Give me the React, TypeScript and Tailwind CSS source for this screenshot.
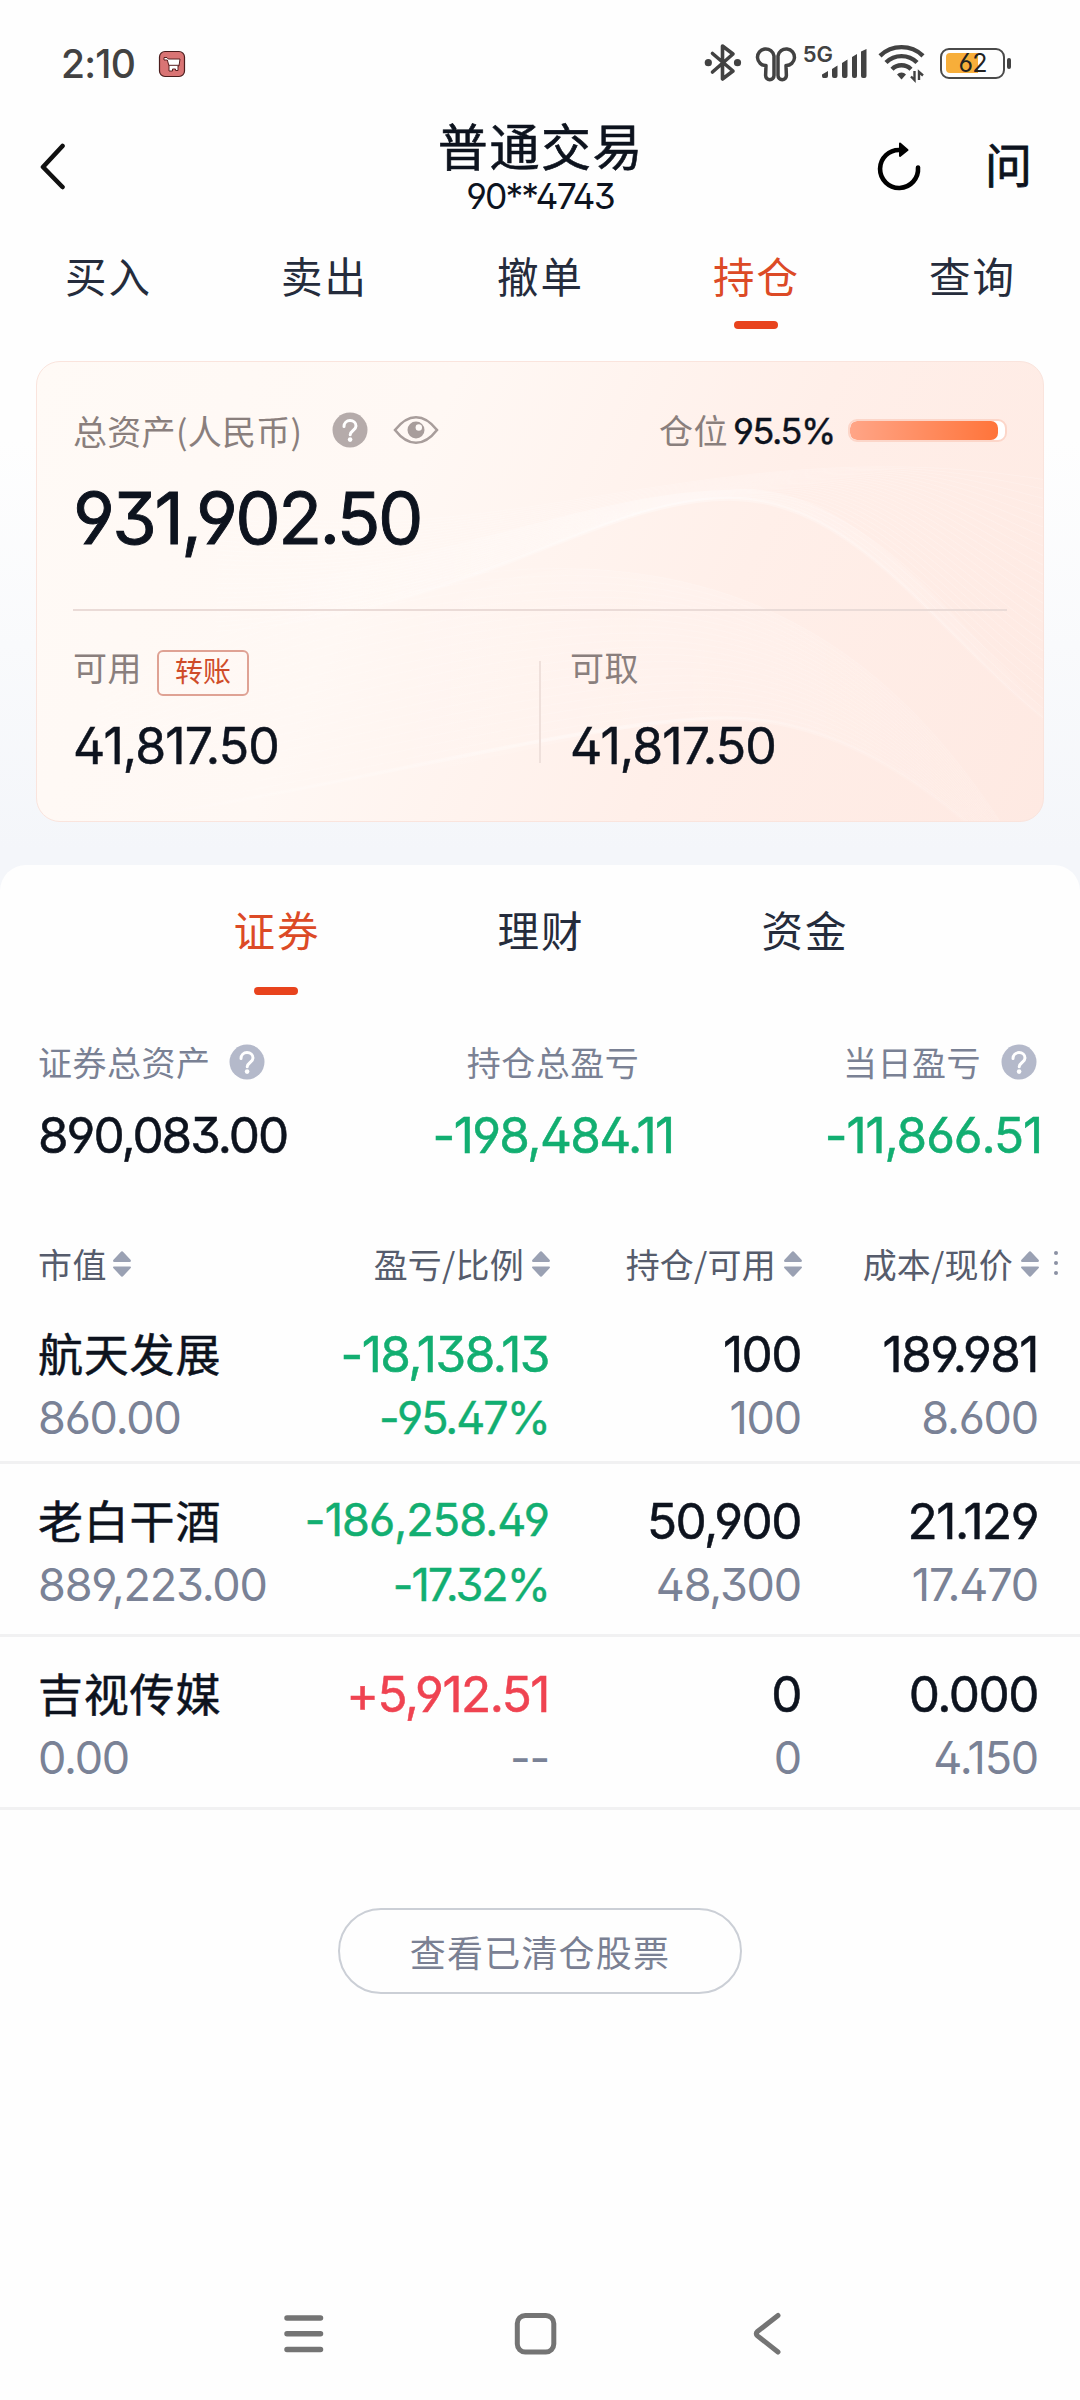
import type { ReactNode } from "react";
import clsx from "clsx";

type Tone = "up" | "down" | "flat";

type Holding = {
  name: string;
  marketValue: string;
  profit: string;
  ratio: string;
  tone: Tone;
  shares: string;
  available: string;
  cost: string;
  price: string;
  compact?: boolean;
};

const NAV_TABS = ["买入", "卖出", "撤单", "持仓", "查询"];
const ASSET_TABS = ["证券", "理财", "资金"];

const HOLDINGS: Holding[] = [
  {
    name: "航天发展",
    marketValue: "860.00",
    profit: "-18,138.13",
    ratio: "-95.47%",
    tone: "down",
    shares: "100",
    available: "100",
    cost: "189.981",
    price: "8.600",
  },
  {
    name: "老白干酒",
    marketValue: "889,223.00",
    profit: "-186,258.49",
    ratio: "-17.32%",
    tone: "down",
    shares: "50,900",
    available: "48,300",
    cost: "21.129",
    price: "17.470",
    compact: true,
  },
  {
    name: "吉视传媒",
    marketValue: "0.00",
    profit: "+5,912.51",
    ratio: "--",
    tone: "up",
    shares: "0",
    available: "0",
    cost: "0.000",
    price: "4.150",
  },
];

/** Digits with open 6/9 and a flat-top 3 where the font has them. */
function Num({ className, children }: { className?: string; children: ReactNode }) {
  return (
    <span
      className={clsx(
        "block whitespace-nowrap font-['Inter','Noto_Sans_CJK_SC',sans-serif] leading-none [font-feature-settings:'ss01','cv03','cv04','cv09']",
        className,
      )}
    >
      {children}
    </span>
  );
}

function HelpIcon({ className }: { className?: string }) {
  return (
    <svg viewBox="0 0 36 36" className={clsx("size-9 shrink-0", className)}>
      <circle cx="18" cy="18" r="17.5" fill="currentColor" />
      <path
        d="M12 14.6c0-3.6 2.6-6 6-6s6 2.3 6 5.4c0 4.4-5.8 4.6-5.8 8.8"
        fill="none"
        stroke="#fff"
        strokeWidth="3"
        strokeLinecap="round"
      />
      <circle cx="18.1" cy="27.6" r="2.3" fill="#fff" />
    </svg>
  );
}

function SortIcon() {
  return (
    <svg viewBox="0 0 20 28" className="h-7 w-5 shrink-0" fill="#9aa1b3">
      <path d="M8.5 2.2a2 2 0 0 1 3 0l7 7.6c.9 1 .5 2.2-.8 2.2H2.3c-1.3 0-1.7-1.2-.8-2.2z" />
      <path d="M8.5 25.8a2 2 0 0 0 3 0l7-7.6c.9-1 .5-1.7-.8-1.7H2.3c-1.3 0-1.7.7-.8 1.7z" />
    </svg>
  );
}

function StatusBar() {
  return (
    <div className="flex h-[104px] items-start justify-between pl-[61px] pr-[69px] pt-[43px] text-[#424242]">
      <div className="flex h-10 items-center">
        <Num className="w-[74px] text-[39px] font-medium tracking-[-0.8px]">2:10</Num>
        <svg viewBox="0 0 28 28" className="ml-[23px] mt-[2px] size-7">
          <rect x="1.5" y="1.5" width="25" height="25" rx="5.5" fill="#d97474" stroke="#4a1d1d" strokeWidth="1.2" />
          <path
            d="M6 7.5h3l1.200 1.500H22l-1 7h-1v4.500h-2.500V19h-3v2H11v-5l-1.700-6H6z"
            fill="#fff"
            stroke="#5a2020"
            strokeWidth="1"
            strokeLinejoin="round"
          />
          <path d="M11 15.3h10" stroke="#5a2020" strokeWidth="1" />
        </svg>
      </div>
      <div className="flex h-10 items-center">
        {/* bluetooth */}
        <svg viewBox="0 0 38 40" className="h-10 w-[38px]" fill="none" stroke="currentColor" strokeWidth="3.6" strokeLinejoin="round" strokeLinecap="round">
          <path d="M8.500 10.500 29 28 18.500 36V3L29 11 8.500 29" />
          <circle cx="4.3" cy="19.7" r="3.6" fill="currentColor" stroke="none" />
          <circle cx="33.5" cy="19.7" r="3.6" fill="currentColor" stroke="none" />
        </svg>
        {/* earbuds */}
        <svg viewBox="0 0 44 40" className="ml-[12px] h-10 w-11" fill="none" stroke="currentColor" strokeWidth="3.5" strokeLinejoin="round">
          <path d="M12 22.500a8.300 8.300 0 1 1 8-9.500v19.500a4.200 4.200 0 0 1-8.400 0z" />
          <path d="M32 22.500a8.300 8.300 0 1 0-8-9.500v19.500a4.200 4.200 0 0 0 8.400 0z" />
        </svg>
        <Num className="ml-[5px] -mt-[18px] text-[22px] font-semibold">5G</Num>
        <svg viewBox="0 0 46 40" className="-ml-3 h-10 w-[46px]" fill="currentColor">
          <path d="M1 31.500l6-3.500v5q0 2-2 2H2.500Q1 35 1 33zM11 26l5.500-3.500V33q0 2-2 2H13q-2 0-2-2zM21 20l5.500-3.500V33q0 2-2 2H23q-2 0-2-2zM31 14l5-3v22q0 2-2 2h-1q-2 0-2-2zM40 8.500l5.500-2.500V33q0 2-2 2H42q-2 0-2-2z" />
        </svg>
        <svg viewBox="0 0 48 40" className="ml-[11px] h-10 w-12" fill="none" stroke="currentColor" strokeWidth="4.4">
          <path d="M2 12.800a31 31 0 0 1 43 0M8 19.500a22 22 0 0 1 31 0M14 26.200a13.500 13.500 0 0 1 19 0" />
          <path d="M23.500 36.500l-4.500-5a6 6 0 0 1 9 0z" fill="currentColor" stroke="none" />
          <path d="M36.500 28v9l-3.500-3.500M41 37v-8l4 3.500" strokeWidth="2.4" />
        </svg>
        <div className="ml-[14px] flex items-center">
          <div className="relative flex h-[31px] w-[65px] items-center justify-center rounded-[9px] border-[2.500px] border-[#4a4a4a]">
            <div className="absolute left-1 top-[3px] h-5 w-[32px] rounded-l-[4px] bg-[#f7ae3a]" />
            <Num className="relative text-[25px] tracking-[-1px] text-[#222]">62</Num>
          </div>
          <div className="ml-[2px] h-[11px] w-[4px] rounded-full bg-[#424242]" />
        </div>
      </div>
    </div>
  );
}

function Header() {
  return (
    <header className="grid h-[124px] grid-cols-[300px_1fr_300px] text-[#0d131e]">
      <svg viewBox="0 0 30 48" className="ml-[38px] mt-[38px] h-12 w-[30px]" fill="none" stroke="#111" strokeWidth="4.6" strokeLinecap="round" strokeLinejoin="round">
        <path d="M24.500 4 5 25l19.500 20" />
      </svg>
      <div className="flex flex-col items-center pt-[15px]">
        <h1 className="pl-[2px] text-[50px] leading-[50px] tracking-[1.600px] [-webkit-text-stroke:0.6px]">普通交易</h1>
        <Num className="mt-[10px] text-[35.5px] leading-[36px] tracking-[-1.9px]">90**4743</Num>
      </div>
      <div className="flex items-start pl-[96px] pt-[36px]">
        <svg viewBox="0 0 48 52" className="h-[52px] w-12" fill="none" stroke="#000" strokeWidth="4.6" strokeLinecap="round">
          <path d="M42 27.500A19 19 0 1 1 24 10" />
          <path d="M24 3.500l7.500 6.500-7.500 6z" fill="#000" strokeWidth="2" strokeLinejoin="round" />
        </svg>
        <span className="-mt-px ml-[61px] text-[47px] leading-[48px] [-webkit-text-stroke:0.8px]">问</span>
      </div>
    </header>
  );
}

function NavTabs() {
  return (
    <nav className="grid h-[112px] grid-cols-5 pt-[24px]">
      {NAV_TABS.map((tab) => (
        <div
          key={tab}
          className={clsx("flex flex-col items-center", tab === "持仓" ? "text-[#dc4a26]" : "text-[#252c3c]")}
        >
          <span className="pl-px text-[41.5px] leading-[46px] tracking-[1.9px]">{tab}</span>
          {tab === "持仓" && <span className="mt-[23px] h-2 w-11 rounded-full bg-[#e8431d]" />}
        </div>
      ))}
    </nav>
  );
}

// Blend two sets of cubic control points into n curves.
function blend(a: number[], b: number[], n: number) {
  return Array.from({ length: n }, (_, i) => {
    const t = i / (n - 1);
    const p = a.map((v, k) => (v + (b[k] - v) * t).toFixed(1));
    return `M${p[0]} ${p[1]}C${p[2]} ${p[3]} ${p[4]} ${p[5]} ${p[6]} ${p[7]}C${p[8]} ${p[9]} ${p[10]} ${p[11]} ${p[12]} ${p[13]}`;
  });
}

function CardWaves() {
  const upper = blend(
    [180, 150, 420, 190, 600, 105, 850, 105, 910, 105, 960, 110, 1010, 118],
    [180, 270, 440, 250, 560, 137, 694, 137, 820, 137, 900, 270, 1010, 358],
    26,
  );
  const lower = blend(
    [60, 330, 240, 240, 420, 200, 560, 208, 760, 220, 880, 330, 966, 462],
    [60, 460, 260, 440, 540, 358, 690, 357, 780, 357, 860, 400, 932, 462],
    22,
  );
  return (
    <svg viewBox="0 0 1008 460" className="absolute inset-0 size-full" fill="none">
      <defs>
        <linearGradient id="glow" x1="0" y1="0" x2="1" y2="0">
          <stop offset="0" stopColor="#fff" stopOpacity="0" />
          <stop offset="0.55" stopColor="#fff" stopOpacity="0.32" />
          <stop offset="1" stopColor="#fff" stopOpacity="0.05" />
        </linearGradient>
      </defs>
      <path
        d="M180 270C440 250 560 137 694 137C820 137 900 270 1010 358V350C900 235 810 118 694 128C560 131 440 190 180 235z"
        fill="url(#glow)"
      />
      <path
        d="M300 430C500 390 600 357 690 357C780 357 860 400 932 462H966C880 330 760 220 560 208C420 200 300 300 300 430z"
        fill="url(#glow)"
        opacity="0.5"
      />
      {upper.map((d) => (
        <path key={d} d={d} stroke="#fff" strokeOpacity="0.2" />
      ))}
      {lower.map((d) => (
        <path key={d} d={d} stroke="#fff" strokeOpacity="0.14" />
      ))}
      <path d={upper[upper.length - 1]} stroke="url(#glow)" strokeWidth="4" />
      <path d={lower[lower.length - 1]} stroke="url(#glow)" strokeWidth="4" />
    </svg>
  );
}

function AssetCard() {
  return (
    <section className="relative mx-9 mt-[21px] h-[461px] overflow-hidden rounded-[24px] border-[1.500px] border-[#fae4dd] bg-[linear-gradient(115deg,#fffaf6_0%,#fff8f4_35%,#ffefe9_66%,#fee9e2_100%)]">
      <CardWaves />
      <div className="relative px-9 text-[#8a7f7d]">
        <div className="mt-[50px] flex h-[36px] items-center">
          <span className="mt-px text-[34px] leading-[36px] tracking-[0.300px]">总资产(人民币)</span>
          <HelpIcon className="ml-[30px] text-[#b5abaa]" />
          <svg viewBox="0 0 46 32" className="ml-[25px] h-8 w-[46px]" fill="none" stroke="#a89d9b" strokeWidth="2.6">
            <path d="M2 16C9 7 16 3.200 23 3.200S37 7 44 16C37 25 30 28.800 23 28.800S9 25 2 16z" />
            <circle cx="23" cy="16" r="8.5" fill="#a89d9b" stroke="none" />
            <circle cx="25.8" cy="13.5" r="3.2" fill="#fffaf7" stroke="none" />
          </svg>
          <span className="ml-auto text-[34px] leading-[36px] tracking-[0.500px]">仓位</span>
          <Num className="ml-[5px] mt-px w-[104px] text-[36px] tracking-[-1.400px] text-[#0d131e] [-webkit-text-stroke:0.4px]">95.5%</Num>
          <div className="ml-[11px] h-[23px] w-[159px] overflow-hidden rounded-[9px] border-2 border-[#fcd6c9] bg-white">
            <div className="h-full rounded-[7px] bg-[linear-gradient(90deg,#ffa587,#ff743a)]" style={{ width: "95.5%" }} />
          </div>
        </div>
        <Num className="mt-[34px] text-[72px] leading-[72px] tracking-[-2.500px] text-[#0d131e] [-webkit-text-stroke:0.9px]">931,902.50</Num>
        <div className="mt-[55px] h-[2px] bg-[#eadbd7]" />
        <div className="grid grid-cols-[466px_1fr]">
          <div>
            <div className="mt-[38px] flex h-[48px] items-start">
              <span className="text-[34px] leading-[36px] tracking-[0.500px]">可用</span>
              <span className="ml-[15px] mt-px flex h-[46px] w-[92px] items-center justify-center rounded-[6px] border-2 border-[#dfa294] pb-[6px] text-[28px] leading-none text-[#cf4c29]">
                转账
              </span>
            </div>
            <Num className="mt-[24px] text-[50px] tracking-[-0.900px] text-[#0d131e] [-webkit-text-stroke:0.5px]">41,817.50</Num>
          </div>
          <div className="relative pl-[31px]">
            <div className="absolute left-0 top-[50px] h-[102px] w-[2px] bg-[#efe0db]" />
            <div className="mt-[38px] flex h-[48px] items-start">
              <span className="text-[34px] leading-[36px] tracking-[0.500px]">可取</span>
            </div>
            <Num className="mt-[24px] text-[50px] tracking-[-0.900px] text-[#0d131e] [-webkit-text-stroke:0.5px]">41,817.50</Num>
          </div>
        </div>
      </div>
    </section>
  );
}

function AssetTabs() {
  return (
    <div className="mx-auto grid h-[130px] w-[792px] grid-cols-3 pt-[41px]">
      {ASSET_TABS.map((tab, i) => (
        <div key={tab} className={clsx("flex flex-col items-center", i === 0 ? "text-[#dc4a26]" : "text-[#252c3c]")}>
          <span className="pl-[2px] text-[41.5px] leading-[46px] tracking-[1.9px]">{tab}</span>
          {i === 0 && <span className="mt-[35px] h-2 w-11 rounded-full bg-[#e8431d]" />}
        </div>
      ))}
    </div>
  );
}

function Summary() {
  const value = "mt-[31px] text-[49.5px] [-webkit-text-stroke:0.5px]";
  return (
    <div className="grid grid-cols-[330px_370px_1fr] pl-[38px] pr-[38px] pt-[49px] text-[34px] leading-[36px] tracking-[0.500px] text-[#7a8194]">
      <div>
        <div className="flex items-center">
          证券总资产
          <HelpIcon className="ml-[18px] text-[#b4b9ca]" />
        </div>
        <Num className={clsx(value, "tracking-[-2px] text-[#0d131e]")}>890,083.00</Num>
      </div>
      <div className="flex flex-col items-center">
        <div>持仓总盈亏</div>
        <Num className={clsx(value, "tracking-[-1.6px] text-[#12ae71]")}>-198,484.11</Num>
      </div>
      <div className="flex flex-col items-end">
        <div className="flex items-center pr-[5px]">
          当日盈亏
          <HelpIcon className="ml-[20px] text-[#b4b9ca]" />
        </div>
        <Num className={clsx(value, "tracking-[-1.1px] text-[#12ae71]")}>-11,866.51</Num>
      </div>
    </div>
  );
}

const GRID = "grid grid-cols-[266px_245px_252px_237px] pl-[38px]";

function TableHeader() {
  return (
    <div className={clsx(GRID, "relative mt-[85px] h-[36px] text-[34px] leading-[36px] text-[#565c6c]")}>
      <div className="flex items-center gap-[5px] tracking-[0.500px]">
        市值
        <SortIcon />
      </div>
      {["盈亏/比例", "持仓/可用", "成本/现价"].map((label) => (
        <div key={label} className="-mr-[2px] flex items-center justify-end gap-[7px] whitespace-nowrap tracking-[0.2px]">
          {label}
          <SortIcon />
        </div>
      ))}
      <div className="absolute right-[22px] top-[5px] flex flex-col gap-[6px]">
        <i className="size-1 rounded-full bg-[#8b91a3]" />
        <i className="size-1 rounded-full bg-[#8b91a3]" />
        <i className="size-1 rounded-full bg-[#8b91a3]" />
      </div>
    </div>
  );
}

const TONE: Record<Tone, string> = {
  up: "text-[#ef4351]",
  down: "text-[#12ae71]",
  flat: "text-[#7a8296]",
};

function HoldingRow({ item, first }: { item: Holding; first: boolean }) {
  const main = "h-[50px] text-[49.5px] leading-[50px] tracking-[-1.5px] [-webkit-text-stroke:0.5px]";
  const sub = "mt-[15px] h-[46px] text-[45px] leading-[46px] tracking-[-1.2px] text-[#7a8296]";
  const right = "flex flex-col items-end";
  return (
    <div className={clsx(GRID, "h-[173px] border-b-[3px] border-[#f1f1f2]", first ? "pt-[39px]" : "pt-[33px]")}>
      <div>
        <div className="h-[50px] whitespace-nowrap text-[45px] leading-[46px] tracking-[0.800px] text-[#0d131e] [-webkit-text-stroke:0.5px]">
          {item.name}
        </div>
        <Num className={sub}>{item.marketValue}</Num>
      </div>
      <div className={right}>
        <Num className={clsx(main, TONE[item.tone], item.compact && "text-[45px]! tracking-[-0.9px]!")}>{item.profit}</Num>
        <Num className={clsx(sub, item.ratio !== "--" && "tracking-[-2px]! text-[#12ae71]! [-webkit-text-stroke:0.4px]")}>
          {item.ratio}
        </Num>
      </div>
      <div className={right}>
        <Num className={clsx(main, "text-[#0d131e]")}>{item.shares}</Num>
        <Num className={sub}>{item.available}</Num>
      </div>
      <div className={right}>
        <Num className={clsx(main, "text-[#0d131e]")}>{item.cost}</Num>
        <Num className={sub}>{item.price}</Num>
      </div>
    </div>
  );
}

function SystemNav() {
  return (
    <div className="mt-[312px] flex h-[56px] items-center pl-[281px] text-[#747474]">
      <svg viewBox="0 0 46 56" className="h-14 w-[46px]" stroke="currentColor" strokeWidth="5.5" strokeLinecap="round">
        <path d="M6 12h33.500M6 27.700h33.500M6 43.400h33.500" />
      </svg>
      <svg viewBox="0 0 46 56" className="ml-[185px] h-14 w-[46px]" fill="none" stroke="currentColor" strokeWidth="5">
        <rect x="5.3" y="9.5" width="36.5" height="36.5" rx="8" />
      </svg>
      <svg viewBox="0 0 46 56" className="ml-[186px] h-14 w-[46px]" fill="none" stroke="currentColor" strokeWidth="5" strokeLinecap="round">
        <path d="M34 9.500 13.500 25.500q-2.500 2.200 0 4.400L34 46" />
      </svg>
    </div>
  );
}

export default function App() {
  return (
    <div className="h-[2400px] w-[1080px] overflow-hidden bg-[#fefefe] font-['Noto_Sans_CJK_SC',sans-serif]">
      <div className="h-[865px] bg-[linear-gradient(180deg,#fefefe_0px,#fefefe_440px,#f4f6fa_850px)]">
        <StatusBar />
        <Header />
        <NavTabs />
        <AssetCard />
      </div>
      <div className="bg-[#f4f6fa]">
        <main className="rounded-t-[26px] bg-[#fefefe]">
          <AssetTabs />
          <Summary />
          <TableHeader />
          <div className="mt-[9px]">
            {HOLDINGS.map((item, i) => (
              <HoldingRow key={item.name} item={item} first={i === 0} />
            ))}
          </div>
          <button className="mx-auto mt-[98px] flex h-[86px] w-[404px] items-center justify-center rounded-full border-2 border-[#cbcfd6] text-[36px] leading-none tracking-[1.200px] text-[#7a8093]">
            查看已清仓股票
          </button>
          <SystemNav />
        </main>
      </div>
    </div>
  );
}
